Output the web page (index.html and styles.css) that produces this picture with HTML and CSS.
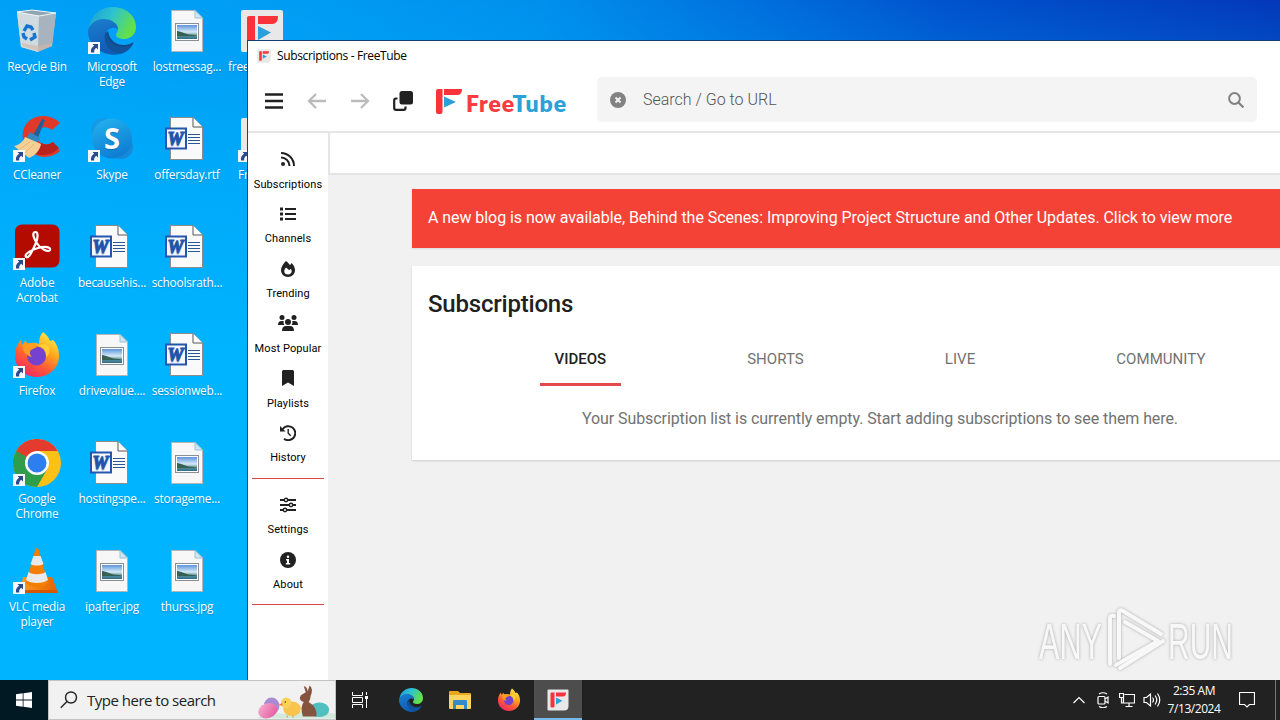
FILE: index.html
```html
<!DOCTYPE html>
<html lang="en">

<head>
    <meta charset="UTF-8">
    <meta name="viewport" content="width=device-width, initial-scale=1.0">
    <title>Subscriptions - FreeTube</title>
    <link rel="stylesheet" href="styles.css">
</head>

<body>
    <!-- Shared icons -->
    <svg class="sprite" width="0" height="0">
        <defs>
            <linearGradient id="edgeTop" x1="0" y1="0" x2="1" y2="0.4">
                <stop offset="0" stop-color="#1b9bd8"/>
                <stop offset="0.5" stop-color="#2cc3cf"/>
                <stop offset="1" stop-color="#63e04a"/>
            </linearGradient>
            <linearGradient id="edgeLeft" x1="0" y1="0" x2="0.3" y2="1">
                <stop offset="0" stop-color="#1b7fd0"/>
                <stop offset="1" stop-color="#0f5cb4"/>
            </linearGradient>
            <linearGradient id="foxBody" x1="0.8" y1="0" x2="0.2" y2="1">
                <stop offset="0" stop-color="#fff14a"/>
                <stop offset="0.35" stop-color="#ffa71e"/>
                <stop offset="0.65" stop-color="#ff5a36"/>
                <stop offset="1" stop-color="#f0206d"/>
            </linearGradient>
            <linearGradient id="skypeBg" x1="0" y1="0" x2="0.4" y2="1">
                <stop offset="0" stop-color="#23b4f0"/>
                <stop offset="1" stop-color="#0f7fd4"/>
            </linearGradient>
            <linearGradient id="photo" x1="0" y1="0" x2="0" y2="1">
                <stop offset="0" stop-color="#5b94dd"/>
                <stop offset="0.5" stop-color="#d6eaf5"/>
                <stop offset="0.75" stop-color="#5d8f95"/>
                <stop offset="1" stop-color="#2d6d8f"/>
            </linearGradient>
            <linearGradient id="cone" x1="0" y1="0" x2="1" y2="0">
                <stop offset="0" stop-color="#ff9a1f"/>
                <stop offset="1" stop-color="#e36200"/>
            </linearGradient>
            <linearGradient id="bin" x1="0" y1="0" x2="1" y2="1">
                <stop offset="0" stop-color="#d3e3ec"/>
                <stop offset="0.6" stop-color="#b9c6cf"/>
                <stop offset="1" stop-color="#8c9aa6"/>
            </linearGradient>
            <linearGradient id="egg" x1="0" y1="0" x2="1" y2="1">
                <stop offset="0" stop-color="#f7b3d3"/>
                <stop offset="1" stop-color="#e0529c"/>
            </linearGradient>
        </defs>

        <symbol id="shortcut" viewBox="0 0 48 48">
            <rect x="0" y="35" width="12" height="12" fill="#f5f8fb"/>
            <path d="M4.500 37H10v5.500L8.200 40.800C6.500 42 6 43.500 6.200 45.500H3C2.600 42.500 3.700 40.300 6.200 38.800z" fill="#2b4a8b"/>
        </symbol>

        <symbol id="recycle" viewBox="0 0 48 48">
            <path d="M4 5l15-2 24 3-4 33-14 6-17-5z" fill="url(#bin)"/>
            <path d="M4 5l22 4-1 36-17-5z" fill="#cfdae1"/>
            <path d="M26 9l17-3-4 33-14 6z" fill="#a7b3bd"/>
            <path d="M4 5l15-2 24 3-17 3z" fill="#8fa5b3" stroke="#edf6fa"/>
            <path d="M9 36l16 3 14-3v3l-14 5-16-5z" fill="#d6b7a5" opacity=".6"/>
            <g fill="none" stroke="#1575cf" stroke-width="3.400">
                <path d="M11 24l3-5 4 1 2 3"/>
                <path d="M21 26l1 4-5 3"/>
                <path d="M14 32l-3-2-1-4"/>
            </g>
        </symbol>

        <symbol id="edge" viewBox="0 0 48 48">
            <path d="M1 22C2 8 13 0 25 0c13 0 23 9 23 20 0 8-6 12-12 12-5 0-8-2-8-4 0-2 2-3 2-6 0-5-6-9-13-9C9 13 3 17 1 22z" fill="url(#edgeTop)"/>
            <path d="M0 24c1-7 8-12 15-12 9 0 15 5 15 10-8-4-16 3-12 12 3 8 9 12 15 13C17 51 0 40 0 24z" fill="url(#edgeLeft)"/>
            <path d="M20 24c-4 3-4 9-1 14 6 9 18 8 26-1 1-1 0-2-1-1-10 5-22 1-24-12z" fill="#114a8b"/>
            <path d="M18 24c-4 8 1 20 14 23 6-1 11-6 13-10-9 6-26 3-27-13z" fill="#11539c"/>
        </symbol>

        <symbol id="picture" viewBox="0 0 48 48">
            <path d="M8.500 3.500H32L39.500 11v33.500h-31z" fill="#f7f7f7" stroke="#b5b5b5"/>
            <path d="M32 3.500V11h7.500z" fill="#cfe6f3" stroke="#a3c3d5"/>
            <rect x="12.500" y="16.500" width="23" height="17" fill="#fff" stroke="#8a8f94"/>
            <rect x="14" y="18" width="20" height="14" fill="url(#photo)"/>
            <path d="M14 24c4 0 9 4 17 4l3 1H14z" fill="#356052"/>
        </symbol>

        <symbol id="word" viewBox="0 0 48 48">
            <path d="M7.500 2.500H30L39.500 12v32.500h-32z" fill="#fafafa" stroke="#8c8c8c"/>
            <path d="M30 2.500V12h9.500" fill="#fff" stroke="#555"/>
            <path d="M25 19.500h12M25 22.500h12M25 25.500h12M25 28.500h12" stroke="#2b5797"/>
            <rect x="3" y="13.500" width="20" height="20" fill="#f5f8fd" stroke="#2456b0" stroke-width="2"/>
            <text x="12.500" y="29.500" class="word-letter">W</text>
        </symbol>

        <symbol id="ccleaner" viewBox="0 0 48 48">
            <path d="M47 8C35-4 13 0 10 17c-3 18 20 34 37 19l-7-9c-8 6-17 0-16-8 1-7 9-9 15-4z" fill="#e0392a"/>
            <path d="M46 33c-6 7-17 9-25 5l7-10c4 2 8 2 12-1z" fill="#b9231d"/>
            <path d="M29 4l3 1-8 20-5-3z" fill="#235f96"/>
            <path d="M17 17l10 6-3 6-11-5z" fill="#3585bf"/>
            <path d="M12 22l16 7c-1 6-6 12-12 14L1 31c5-1 9-4 11-9z" fill="#f5cf93"/>
            <path d="M7 34l10-7M12 38l9-9" stroke="#e3b678"/>
        </symbol>

        <symbol id="skype" viewBox="0 0 48 48">
            <circle cx="15" cy="15" r="12" fill="#159be2"/>
            <circle cx="33" cy="32" r="12" fill="#168ad8"/>
            <circle cx="24" cy="23.500" r="20" fill="url(#skypeBg)"/>
            <text x="24" y="33.500" class="skype-letter">S</text>
        </symbol>

        <symbol id="acrobat" viewBox="0 0 48 48">
            <rect x="2" y="1.500" width="44.500" height="43" rx="7" fill="#b30b00"/>
            <path d="M13 34c-2-3 5-7 12-9s13-1 12 2-10-1-14-8-3-10-.5-10 3 5 0 12-7 15-9.500 13z" fill="none" stroke="#fff" stroke-width="2.200"/>
        </symbol>

        <symbol id="firefox" viewBox="0 0 48 48">
            <path d="M30 1c4 3 6 6 7 9l3-1c4 4 6 10 6 16 0 12-10 21-22 21S2 37 2 25c0-7 2-12 6-16l1 5 4-5c0 2 1 3 2 4 4-2 8-1 11 0 0-5 1-9 4-12z" fill="url(#foxBody)"/>
            <circle cx="23.500" cy="25" r="9.500" fill="#7542cf"/>
            <path d="M9 14c5-3 11-2 15 2l-6 3c-2 2-1 5 1 7-6-1-9-6-10-12z" fill="#ff9b20"/>
            <path d="M25 15c5 0 9 5 8 11 3-2 4-6 3-10-2-3-6-4-11-1z" fill="#ffd032"/>
        </symbol>

        <symbol id="chrome" viewBox="0 0 48 48">
            <circle cx="24" cy="24" r="24" fill="#fbc116"/>
            <path d="M24 24L3.200 12A24 24 0 0 0 24 48l10.400-18z" fill="#2f9e4b"/>
            <path d="M3.200 12A24 24 0 0 1 44.800 12H24L13.600 30z" fill="#e33b2e"/>
            <path d="M3.200 12l10.400 18L24 24z" fill="#2f9e4b"/>
            <circle cx="24" cy="24" r="12" fill="#fff"/>
            <circle cx="24" cy="24" r="9.500" fill="#2d7ff0"/>
        </symbol>

        <symbol id="vlc" viewBox="0 0 48 48">
            <path d="M10 30h29l6 16H7z" fill="url(#cone)"/>
            <path d="M8 43h36l1 3H7z" fill="#d45800"/>
            <path d="M22.500 2q1.500-2 3 0L35 36c-4 5-18 5-22 0z" fill="#f57d00"/>
            <path d="M20.500 9h7l3 8c-3 2-10 2-13 0z" fill="#e9e9e9"/>
            <path d="M15.500 25c4 3 13 3 17 0l2.500 8c-5 4-17 4-22 0z" fill="#e9e9e9"/>
        </symbol>

        <symbol id="ftMark" viewBox="0 0 26 25">
            <path d="M0 2Q0 0 2 0h4.500v22.500q0 2.500-2.500 2.500H2q-2 0-2-2z" fill="#fa3239"/>
            <path d="M8 0h18q0 6-5 6H8z" fill="#fa3239"/>
            <path d="M8 7.500l12 5.500L8 18.500z" fill="#2d9fd9"/>
        </symbol>

        <symbol id="ftTile" viewBox="0 0 48 48">
            <path d="M5 3h38q2 0 2 2v31q0 9-9 9H5q-2 0-2-2V5q0-2 2-2z" fill="#e8e8e8"/>
            <path d="M9 11q0-2 2-2h6v27q0 3-3 3h-3q-2 0-2-2z" fill="#fa3239"/>
            <path d="M20 9h20q0 8-6 8H20z" fill="#fa3239"/>
            <path d="M20 19l13 6.500L20 33z" fill="#2d9fd9"/>
        </symbol>
    </svg>

    <div class="desktop">
        <div class="icon"><svg class="pic"><use href="#recycle"/></svg><span>Recycle Bin</span></div>
        <div class="icon"><svg class="pic"><use href="#ccleaner"/><use href="#shortcut"/></svg><span>CCleaner</span></div>
        <div class="icon"><svg class="pic"><use href="#acrobat"/><use href="#shortcut"/></svg><span>Adobe Acrobat</span></div>
        <div class="icon"><svg class="pic"><use href="#firefox"/><use href="#shortcut"/></svg><span>Firefox</span></div>
        <div class="icon"><svg class="pic"><use href="#chrome"/><use href="#shortcut"/></svg><span>Google Chrome</span></div>
        <div class="icon"><svg class="pic"><use href="#vlc"/><use href="#shortcut"/></svg><span>VLC media player</span></div>

        <div class="icon"><svg class="pic"><use href="#edge"/><use href="#shortcut"/></svg><span>Microsoft Edge</span></div>
        <div class="icon"><svg class="pic"><use href="#skype"/><use href="#shortcut"/></svg><span>Skype</span></div>
        <div class="icon"><svg class="pic"><use href="#word"/></svg><span>becausehis...</span></div>
        <div class="icon"><svg class="pic"><use href="#picture"/></svg><span>drivevalue....</span></div>
        <div class="icon"><svg class="pic"><use href="#word"/></svg><span>hostingspe...</span></div>
        <div class="icon"><svg class="pic"><use href="#picture"/></svg><span>ipafter.jpg</span></div>

        <div class="icon"><svg class="pic"><use href="#picture"/></svg><span>lostmessag...</span></div>
        <div class="icon"><svg class="pic"><use href="#word"/></svg><span>offersday.rtf</span></div>
        <div class="icon"><svg class="pic"><use href="#word"/></svg><span>schoolsrath...</span></div>
        <div class="icon"><svg class="pic"><use href="#word"/></svg><span>sessionweb...</span></div>
        <div class="icon"><svg class="pic"><use href="#picture"/></svg><span>storageme...</span></div>
        <div class="icon"><svg class="pic"><use href="#picture"/></svg><span>thurss.jpg</span></div>

        <div class="icon cut"><svg class="pic"><use href="#ftTile"/></svg><span>free</span></div>
        <div class="icon cut short"><svg class="pic"><use href="#ftTile"/><use href="#shortcut"/></svg><span>Fr</span></div>
    </div>

    <div class="window">
        <div class="titlebar">
            <svg width="14" height="14" viewBox="2 2 44 44"><use href="#ftTile" width="48" height="48"/></svg>
            <span>Subscriptions - FreeTube</span>
        </div>

        <header class="topnav">
            <svg class="nav-icon" viewBox="0 0 20 20"><path d="M1 3.500h18M1 10h18M1 16.500h18" stroke="#212121" stroke-width="2.500"/></svg>
            <svg class="nav-icon faded" viewBox="0 0 20 20"><path d="M19 10H2.500M9 3l-7 7 7 7" fill="none" stroke="#212121" stroke-width="2.300"/></svg>
            <svg class="nav-icon faded" viewBox="0 0 20 20"><path d="M1 10h16.500M11 3l7 7-7 7" fill="none" stroke="#212121" stroke-width="2.300"/></svg>
            <svg class="nav-icon" viewBox="0 0 20 20">
                <rect x="6.500" y="0" width="13.500" height="13.500" rx="2.500" fill="#212121"/>
                <path d="M4.500 7.500H3Q1.200 7.500 1.200 9.300V17q0 1.800 1.800 1.800h7.700q1.800 0 1.800-1.800v-1.500" fill="none" stroke="#212121" stroke-width="2.200"/>
            </svg>
            <div class="logo">
                <svg width="26" height="25"><use href="#ftMark"/></svg>
                <span class="logo-text"><b>Free</b><i>Tube</i></span>
            </div>
            <div class="search">
                <svg width="16" height="16" viewBox="0 0 16 16">
                    <circle cx="8" cy="8" r="8" fill="#828282"/>
                    <path d="M5.500 5.500l5 5M10.500 5.500l-5 5" stroke="#f5f5f5" stroke-width="1.800"/>
                </svg>
                <span>Search / Go to URL</span>
                <svg width="16" height="16" viewBox="0 0 16 16">
                    <circle cx="6.500" cy="6.500" r="5.400" fill="none" stroke="#828282" stroke-width="2"/>
                    <path d="M10.500 10.500l5 5" stroke="#828282" stroke-width="2.200"/>
                </svg>
            </div>
        </header>

        <div class="app">
            <nav class="sidenav">
                <a class="nav-link">
                    <svg viewBox="0 0 16 16"><circle cx="3" cy="13" r="2" /><path d="M1 6.500A8.500 8.500 0 0 1 9.500 15M1 2a13 13 0 0 1 13 13" class="line"/></svg>
                    <span>Subscriptions</span>
                </a>
                <a class="nav-link">
                    <svg viewBox="0 0 16 16"><path d="M0 1.500h3v3H0zM0 6.500h3v3H0zM0 11.500h3v3H0zM5 2h11v2H5zM5 7h11v2H5zM5 12h11v2H5z"/></svg>
                    <span>Channels</span>
                </a>
                <a class="nav-link">
                    <svg viewBox="0 0 16 16"><path fill-rule="evenodd" d="M6 0c2 1.500 3.200 3 4 4.200L11.600 2C13.500 4 15 6.600 15 9c0 4-3 7-7 7s-7-3-7-7c0-3 2.500-6.500 5-9zM6 6.500C4.800 8 4.300 9 4.300 10.200 4.300 12.300 5.900 13.500 8 13.500s3.700-1.300 3.700-3.200c0-1-.5-2-1-2.600L9.300 9.300z"/></svg>
                    <span>Trending</span>
                </a>
                <a class="nav-link">
                    <svg class="wide" viewBox="0 0 20 16"><circle cx="4" cy="2.500" r="2.500"/><circle cx="16" cy="2.500" r="2.500"/><circle cx="10" cy="7" r="3"/><path d="M0 10q0-4 3.500-4h2.200Q5 8 6.400 10zM20 10q0-4-3.500-4h-2.200q.7 2-.7 4zM4 16q0-5 4-5h4q4 0 4 5z"/></svg>
                    <span>Most Popular</span>
                </a>
                <a class="nav-link">
                    <svg viewBox="0 0 16 16"><path d="M2 1.500Q2 0 3.500 0h9Q14 0 14 1.500V16l-6-3.500L2 16z"/></svg>
                    <span>Playlists</span>
                </a>
                <a class="nav-link">
                    <svg viewBox="0 0 16 16"><path d="M2.500 4.200A7 7 0 1 1 4 13.700" class="line"/><path d="M0 1v5.500h5.500z"/><path d="M8.200 4v4.200l2.500 2.500" class="line thin"/></svg>
                    <span>History</span>
                </a>
                <hr>
                <a class="nav-link">
                    <svg viewBox="0 0 16 16"><path d="M0 3h4M8 3h8M0 8h9M13 8h3M0 13h3M7 13h9" class="line"/><g class="line thin"><circle cx="6" cy="3" r="1.700"/><circle cx="11" cy="8" r="1.700"/><circle cx="5" cy="13" r="1.700"/></g></svg>
                    <span>Settings</span>
                </a>
                <a class="nav-link">
                    <svg viewBox="0 0 16 16"><circle cx="8" cy="8" r="8"/><circle cx="8" cy="4.700" r="1.200" fill="#fff"/><path d="M6 7h3v4h1.200v1.500H5.800V11H7V8.500H6z" fill="#fff"/></svg>
                    <span>About</span>
                </a>
                <hr>
            </nav>

            <main class="content">
                <div class="tabstrip"></div>
                <div class="banner">A new blog is now available, Behind the Scenes: Improving Project Structure and Other Updates. Click to view more</div>
                <section class="card">
                    <h2>Subscriptions</h2>
                    <div class="tabs">
                        <div class="tab selected">VIDEOS</div>
                        <div class="tab">SHORTS</div>
                        <div class="tab">LIVE</div>
                        <div class="tab">COMMUNITY</div>
                    </div>
                    <p class="message">Your Subscription list is currently empty. Start adding subscriptions to see them here.</p>
                </section>
            </main>
        </div>
    </div>

    <svg class="watermark" width="220" height="64" viewBox="0 0 220 64">
        <text x="3" y="51" textLength="63" lengthAdjust="spacingAndGlyphs">ANY</text>
        <text x="132" y="51" textLength="65" lengthAdjust="spacingAndGlyphs">RUN</text>
        <g class="mark">
            <path d="M74 56V10q0-3 4-2"/>
            <path d="M83 50V4q1-3 4-1l38 23"/>
            <path d="M89 14l33 19-42 24"/>
            <path d="M127 33L84 60"/>
        </g>
    </svg>

    <div class="taskbar">
        <div class="start">
            <svg width="16" height="16" viewBox="0 0 16 16"><path d="M0 2.300L6.700 1.300v6.200H0zM7.500 1.200L16 0v7.500H7.500zM0 8.400h6.700v6.300L0 13.700zM7.500 8.400H16V16l-8.500-1.200z" fill="#fff"/></svg>
        </div>
        <div class="task-search">
            <svg width="18" height="18" viewBox="0 0 18 18"><circle cx="11" cy="6.500" r="5.500" fill="none" stroke="#222" stroke-width="1.400"/><path d="M7 10.500L.8 16.700" stroke="#222" stroke-width="1.400"/></svg>
            <span>Type here to search</span>
            <!-- Easter search highlight -->
            <svg class="highlight" width="78" height="38" viewBox="0 0 80 38">
                <path d="M0 38q10-7 30-5 25-6 50 0v5z" fill="#d3e9dc"/>
                <ellipse cx="15" cy="25" rx="8" ry="8.500" fill="#a98bd4"/>
                <ellipse cx="11" cy="30" rx="10" ry="7.500" transform="rotate(-20 11 30)" fill="url(#egg)"/>
                <ellipse cx="36" cy="28" rx="9" ry="7.500" fill="#f9c44c"/>
                <circle cx="30" cy="22" r="5.500" fill="#fbd15c"/>
                <path d="M26 22l-4 2 4 1z" fill="#ee7b22"/>
                <circle cx="29" cy="21" r=".8" fill="#333"/>
                <path d="M31 35v2M37 35v2" stroke="#e58a28"/>
                <ellipse cx="64" cy="29" rx="10" ry="7.500" fill="#4fbfc0"/>
                <path d="M47 36q-3-11 1-15-6-2-3-7l5-3-2-6q3 0 4 5l2-6q4 3 1 11 0 4-2 6 9 5 8 15z" fill="#85543f"/>
            </svg>
        </div>
        <div class="task view">
            <svg width="18" height="18" viewBox="0 0 18 18" fill="none" stroke="#fff"><path d="M1.500 1v3.500h10V1M1.500 17v-3.500h10V17M1.500 6.500h10v5h-10zM15.500 1v3M15.500 8v9"/><path d="M14 5h3v3h-3z" fill="#fff" stroke="none"/></svg>
        </div>
        <div class="task"><svg width="24" height="24"><use href="#edge"/></svg></div>
        <div class="task">
            <svg width="22" height="20" viewBox="0 0 22 20">
                <path d="M0 2q0-1 1-1h8l2 2h10q1 0 1 1v14H0z" fill="#e9a820"/>
                <path d="M0 5h22v13q0 1-1 1H1q-1 0-1-1z" fill="#fcd462"/>
                <path d="M4 19v-8q0-1 1-1h12q1 0 1 1v8h-3v-4H7v4z" fill="#338cc9"/>
            </svg>
        </div>
        <div class="task"><svg width="24" height="24"><use href="#firefox"/></svg></div>
        <div class="task active"><svg width="24" height="24"><use href="#ftTile"/></svg></div>

        <div class="tray">
            <svg width="16" height="16" viewBox="0 0 16 16"><path d="M2.500 11L8 5.500l5.500 5.500"/></svg>
            <svg width="16" height="16" viewBox="0 0 16 16"><rect x="3" y="4.500" width="7" height="7.500" rx="1"/><path d="M10 7l3-2v6l-3-2M4 2q4-2.500 8 0M4 14.500q4 2.500 8 0"/></svg>
            <svg width="16" height="16" viewBox="0 0 16 16"><path d="M5.500 2.500h10v8.500H4.500V6M10 11v3M6.500 14.500h7M.5 1.500h4v4h-4zM2.500 5.500V11h2"/></svg>
            <svg width="18" height="16" viewBox="0 0 18 16"><path d="M1 5.500h2.500l4-3.500v12l-4-3.500H1zM9.500 5.500q2 2.500 0 5M12 3.500q3.500 4.500 0 9M14.500 1.500q4.500 6.500 0 13"/></svg>
        </div>
        <div class="clock"><span>2:35 AM</span><span>7/13/2024</span></div>
        <svg class="notice" width="16" height="16" viewBox="0 0 16 16"><path d="M.5.500h15v12h-5L8 15l-2.500-2.500h-5z"/></svg>
        <div class="peek"></div>
    </div>
</body>

</html>
```
FILE: styles.css
```css
body {
    margin: 0;
    width: 1280px;
    height: 720px;
    overflow: hidden;
    position: relative;
    font-family: Roboto, sans-serif;
    background: linear-gradient(to right, #00a0f6 0, #009cf3 300px, #0090ec 540px, #0072de 740px, #0052cd 950px, #0338b9 1280px);
}

.sprite {
    position: absolute;
}

/* Desktop */
.desktop {
    display: grid;
    grid-auto-flow: column;
    grid-template-rows: repeat(6, 108px);
    grid-auto-columns: 74px;
    column-gap: 1px;
    height: 673px;
    padding-top: 7px;
    background: linear-gradient(to bottom, rgba(0, 180, 255, 0) 0, rgba(0, 180, 255, 0.6) 200px, #00b4ff 350px);
}

.icon {
    display: flex;
    flex-direction: column;
    align-items: center;
    font-family: "Open Sans", sans-serif;
    font-size: 11.8px;
    line-height: 15px;
    letter-spacing: -0.2px;
    color: #fff;
    text-align: center;
    text-shadow: 0 1px 1px rgba(0, 50, 100, 0.3);
}

.icon span {
    margin-top: 4px;
}

.icon.cut span {
    align-self: flex-start;
    margin-left: 3px;
}

.icon.short span {
    margin-left: 13px;
}

.pic {
    width: 48px;
    height: 48px;
    flex: none;
}

.word-letter {
    font: italic bold 18px "Liberation Serif", serif;
    fill: #2456b0;
    stroke: #2456b0;
    text-anchor: middle;
}

.skype-letter {
    font: bold 29px "Open Sans", sans-serif;
    fill: #fff;
    text-anchor: middle;
}

/* FreeTube window */
.window {
    position: absolute;
    left: 247px;
    top: 40px;
    width: 1033px;
    height: 640px;
    box-sizing: border-box;
    border-left: 1px solid #124a6e;
    border-top: 1px solid #173f6e;
    background: #fff;
    display: flex;
    flex-direction: column;
    overflow: hidden;
}

.titlebar {
    display: flex;
    align-items: center;
    gap: 6px;
    height: 30px;
    padding-left: 9px;
    font-family: "Open Sans", sans-serif;
    font-size: 12px;
    letter-spacing: -0.36px;
    color: #000;
}

.titlebar span {
    margin-top: -2px;
}

.topnav {
    display: flex;
    align-items: center;
    height: 60px;
    padding-left: 16px;
    border-bottom: 2px solid #e6e6e6;
}

.nav-icon {
    width: 20px;
    height: 20px;
    margin-right: 23px;
}

.nav-icon.faded {
    opacity: 0.3;
}

.logo {
    display: flex;
    align-items: center;
    width: 161px;
    gap: 4px;
}

.logo-text {
    font-family: Lato, sans-serif;
    font-size: 23px;
    font-weight: 800;
    line-height: 25px;
    letter-spacing: 0.9px;
    padding-top: 4px;
}

.logo-text b {
    color: #fa3b42;
    font-weight: 800;
}

.logo-text i {
    color: #2d9fd9;
    font-style: normal;
}

.search {
    display: flex;
    align-items: center;
    width: 660px;
    height: 45px;
    box-sizing: border-box;
    margin-bottom: 3px;
    padding: 0 13px;
    border-radius: 5px;
    background: #f4f4f4;
    color: #555;
    font-size: 16px;
    font-weight: 300;
}

.search span {
    flex: 1;
    margin-left: 17px;
}

.app {
    display: flex;
    flex: 1;
    min-height: 0;
}

.sidenav {
    width: 80px;
    flex: none;
    padding-top: 18px;
    background: #fff;
}

.nav-link {
    display: flex;
    flex-direction: column;
    align-items: center;
    height: 54.8px;
    font-size: 11px;
    line-height: 14px;
    letter-spacing: 0.1px;
    color: #000;
}

.nav-link svg {
    width: 16px;
    height: 16px;
    margin-bottom: 10.5px;
    fill: #212121;
}

.nav-link svg.wide {
    width: 20px;
}

.nav-link .line {
    fill: none;
    stroke: #212121;
    stroke-width: 2;
}

.nav-link .thin {
    stroke-width: 1.4;
}

.sidenav hr {
    height: 1px;
    border: none;
    margin: -2px 4px 18px;
    background: #d8474b;
}

.content {
    flex: 1;
    min-width: 0;
    background: #f1f1f1;
    overflow: hidden;
}

.tabstrip {
    height: 40px;
    background: #fff;
    border-left: 2px solid #e6e6e6;
    border-bottom: 2px solid #e4e4e4;
}

.banner {
    box-sizing: border-box;
    width: 936px;
    height: 59px;
    margin: 14px 0 18px 84px;
    padding: 0 16px;
    line-height: 57px;
    font-size: 16px;
    letter-spacing: -0.06px;
    color: #fff;
    background: #f44336;
    white-space: nowrap;
    box-shadow: 0 1px 2px rgba(0, 0, 0, 0.1);
}

.card {
    box-sizing: border-box;
    width: 936px;
    height: 194px;
    margin-left: 84px;
    padding: 22px 16px 0;
    background: #fff;
    box-shadow: 0 1px 2px rgba(0, 0, 0, 0.15);
}

.card h2 {
    margin: 0;
    font-size: 24px;
    line-height: 32px;
    font-weight: 500;
    letter-spacing: -0.2px;
    color: #212121;
}

.tabs {
    display: flex;
    justify-content: center;
    gap: 111px;
    margin-top: 12px;
}

.tab {
    height: 51px;
    padding: 0 15px;
    border-bottom: 3px solid transparent;
    line-height: 54px;
    font-size: 15px;
    letter-spacing: 0.06px;
    color: #727272;
}

.tab.selected {
    color: #212121;
    font-weight: 500;
    letter-spacing: 0;
    border-bottom-color: #e2494a;
}

.message {
    margin: 23px 0 0;
    text-align: center;
    font-size: 16px;
    line-height: 20px;
    letter-spacing: -0.08px;
    color: #727272;
}

.watermark {
    position: absolute;
    left: 1036px;
    top: 608px;
    fill: #f8f8f8;
    filter: drop-shadow(0 0 1.5px rgba(0, 0, 0, 0.3));
}

.watermark text {
    font: 50px "Liberation Sans", sans-serif;
}

.watermark .mark {
    fill: none;
    stroke: #f8f8f8;
    stroke-width: 4;
    stroke-linejoin: round;
    stroke-linecap: round;
}

/* Taskbar */
.taskbar {
    display: flex;
    align-items: center;
    height: 40px;
    background: #222;
    color: #fff;
    font-family: "Open Sans", sans-serif;
}

.start {
    display: flex;
    align-items: center;
    justify-content: center;
    width: 48px;
    height: 40px;
    background: #001923;
}

.task-search {
    display: flex;
    align-items: center;
    width: 288px;
    height: 40px;
    box-sizing: border-box;
    padding-left: 11px;
    border: 1px solid #c4c4c4;
    background: #f1f1f1;
    color: #222;
    font-size: 15px;
}

.task-search span {
    margin-left: 9px;
    width: 138px;
    white-space: nowrap;
    letter-spacing: -0.5px;
}

.highlight {
    margin-left: auto;
}

.task {
    display: flex;
    align-items: center;
    justify-content: center;
    width: 48px;
    height: 40px;
    box-sizing: border-box;
    margin-right: 1px;
}

.task.view {
    margin-right: 3px;
}

.task.active {
    background: #4d4d4d;
    border-bottom: 2px solid #76b9ed;
    padding-top: 2px;
}

.tray {
    display: flex;
    gap: 8px;
    margin-left: auto;
    width: 90px;
}

.tray svg,
.notice {
    flex: none;
    fill: none;
    stroke: #fff;
    stroke-width: 1.2;
}

.clock {
    display: flex;
    flex-direction: column;
    width: 66px;
    text-align: center;
    font-size: 12px;
    line-height: 18px;
    letter-spacing: -0.45px;
}

.notice {
    margin: 0 20px 0 12px;
}

.peek {
    width: 4px;
    height: 40px;
    border-left: 1px solid #777;
}
```
